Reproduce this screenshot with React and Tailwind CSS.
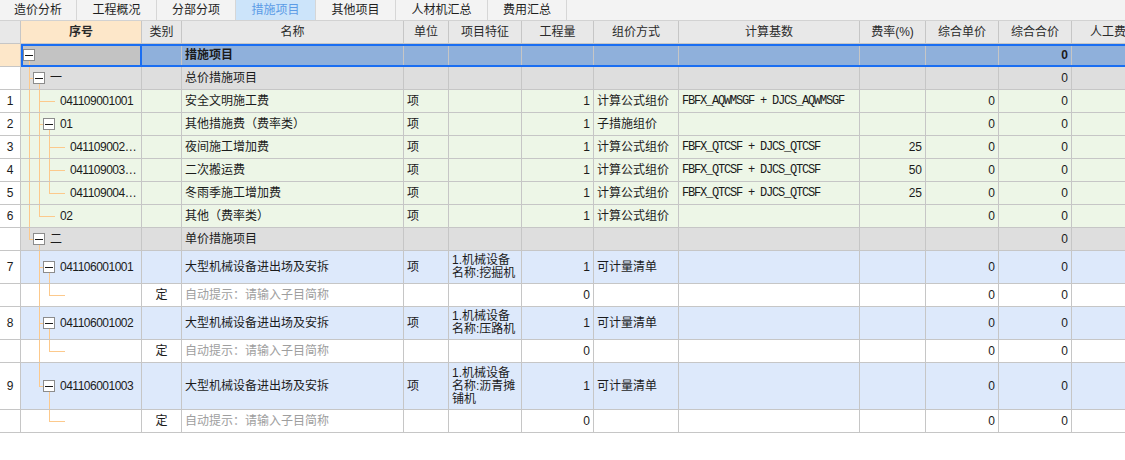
const COLS =
  "grid grid-cols-[21px_121px_40px_222px_45px_73px_72px_85px_181px_66px_73px_73px_73px]";

const tabs = [
  { label: "造价分析", w: "w-[77px]" },
  { label: "工程概况", w: "w-[80px]" },
  { label: "分部分项", w: "w-[79px]" },
  { label: "措施项目", w: "w-[80px]", active: true },
  { label: "其他项目", w: "w-[80px]" },
  { label: "人材机汇总", w: "w-[92px]" },
  { label: "费用汇总", w: "w-[79px]" },
];

const heads = [
  "", "序号", "类别", "名称", "单位", "项目特征", "工程量", "组价方式",
  "计算基数", "费率(%)", "综合单价", "综合合价", "人工费",
];

const CALC = "计算公式组价";
const QT = "FBFX_QTCSF + DJCS_QTCSF";
const HINT = "自动提示：请输入子目简称";

const rows = [
  {
    h: "h-[23px]", bg: "bg-[#dedede]", pad: "pl-[29px]", code: "一", name: "总价措施项目", total: "0",
    t: { full: ["left-[8px]"], hl: "left-[8px] w-[4px]", box: "left-[12px]", down: "left-[18px]" },
  },
  {
    h: "h-[23px]", bg: "bg-[#edf6e7]", num: "1", pad: "pl-[39px]", code: "041109001001", name: "安全文明施工费",
    unit: "项", qty: "1", method: CALC, base: "FBFX_AQWMSGF + DJCS_AQWMSGF", up: "0", total: "0",
    t: { full: ["left-[8px]", "left-[18px]"], hl: "left-[18px] w-[16px]" },
  },
  {
    h: "h-[23px]", bg: "bg-[#edf6e7]", num: "2", pad: "pl-[39px]", code: "01", name: "其他措施费（费率类）",
    unit: "项", qty: "1", method: "子措施组价", up: "0", total: "0",
    t: { full: ["left-[8px]", "left-[18px]"], hl: "left-[18px] w-[4px]", box: "left-[22px]", down: "left-[28px]" },
  },
  {
    h: "h-[23px]", bg: "bg-[#edf6e7]", num: "3", pad: "pl-[49px]", code: "041109002…", name: "夜间施工增加费",
    unit: "项", qty: "1", method: CALC, base: QT, rate: "25", up: "0", total: "0",
    t: { full: ["left-[8px]", "left-[18px]", "left-[28px]"], hl: "left-[28px] w-[16px]" },
  },
  {
    h: "h-[23px]", bg: "bg-[#edf6e7]", num: "4", pad: "pl-[49px]", code: "041109003…", name: "二次搬运费",
    unit: "项", qty: "1", method: CALC, base: QT, rate: "50", up: "0", total: "0",
    t: { full: ["left-[8px]", "left-[18px]", "left-[28px]"], hl: "left-[28px] w-[16px]" },
  },
  {
    h: "h-[23px]", bg: "bg-[#edf6e7]", num: "5", pad: "pl-[49px]", code: "041109004…", name: "冬雨季施工增加费",
    unit: "项", qty: "1", method: CALC, base: QT, rate: "25", up: "0", total: "0",
    t: { full: ["left-[8px]", "left-[18px]"], half: ["left-[28px]"], hl: "left-[28px] w-[16px]" },
  },
  {
    h: "h-[23px]", bg: "bg-[#edf6e7]", num: "6", pad: "pl-[39px]", code: "02", name: "其他（费率类）",
    unit: "项", qty: "1", method: CALC, up: "0", total: "0",
    t: { full: ["left-[8px]"], half: ["left-[18px]"], hl: "left-[18px] w-[16px]" },
  },
  {
    h: "h-[23px]", bg: "bg-[#dedede]", pad: "pl-[29px]", code: "二", name: "单价措施项目", total: "0",
    t: { half: ["left-[8px]"], hl: "left-[8px] w-[4px]", box: "left-[12px]", down: "left-[18px]" },
  },
  {
    h: "h-[33px]", bg: "bg-[#dde9fb]", num: "7", pad: "pl-[39px]", code: "041106001001", name: "大型机械设备进出场及安拆",
    unit: "项", feat: ["1.机械设备", "名称:挖掘机"], qty: "1", method: "可计量清单", up: "0", total: "0",
    t: { full: ["left-[18px]"], hl: "left-[18px] w-[4px]", box: "left-[22px]", down: "left-[28px]" },
  },
  {
    h: "h-[23px]", bg: "bg-white", type: "定", hint: true, qty: "0", up: "0", total: "0",
    t: { full: ["left-[18px]"], half: ["left-[28px]"], hl: "left-[28px] w-[16px]" },
  },
  {
    h: "h-[33px]", bg: "bg-[#dde9fb]", num: "8", pad: "pl-[39px]", code: "041106001002", name: "大型机械设备进出场及安拆",
    unit: "项", feat: ["1.机械设备", "名称:压路机"], qty: "1", method: "可计量清单", up: "0", total: "0",
    t: { full: ["left-[18px]"], hl: "left-[18px] w-[4px]", box: "left-[22px]", down: "left-[28px]" },
  },
  {
    h: "h-[23px]", bg: "bg-white", type: "定", hint: true, qty: "0", up: "0", total: "0",
    t: { full: ["left-[18px]"], half: ["left-[28px]"], hl: "left-[28px] w-[16px]" },
  },
  {
    h: "h-[47px]", bg: "bg-[#dde9fb]", num: "9", pad: "pl-[39px]", code: "041106001003", name: "大型机械设备进出场及安拆",
    unit: "项", feat: ["1.机械设备", "名称:沥青摊", "铺机"], qty: "1", method: "可计量清单", up: "0", total: "0",
    t: { half: ["left-[18px]"], hl: "left-[18px] w-[4px]", box: "left-[22px]", down: "left-[28px]" },
  },
  {
    h: "h-[23px]", bg: "bg-white", type: "定", hint: true, qty: "0", up: "0", total: "0",
    t: { half: ["left-[28px]"], hl: "left-[28px] w-[16px]" },
  },
];

const cell =
  "flex items-center overflow-hidden whitespace-nowrap border-r border-b border-[#c6c6c6] px-[3px]";
const LINE = "bg-[#fcc98c]";

function Tree({ t }) {
  return (
    <>
      {(t.full || []).map((c) => (
        <span key={"f" + c} className={`absolute top-0 -bottom-px w-px ${LINE} ${c}`} />
      ))}
      {(t.half || []).map((c) => (
        <span key={"h" + c} className={`absolute top-0 h-1/2 w-px ${LINE} ${c}`} />
      ))}
      {t.hl && <span className={`absolute top-1/2 h-px ${LINE} ${t.hl}`} />}
      {t.down && (
        <span className={`absolute top-[calc(50%+6px)] -bottom-px w-px ${LINE} ${t.down}`} />
      )}
      {t.box && (
        <span
          className={`absolute top-1/2 -translate-y-1/2 w-[12px] h-[12px] border border-[#8c8c8c] bg-white flex items-center justify-center ${t.box}`}
        >
          <span className="w-[8px] h-px bg-[#1a1a1a]" />
        </span>
      )}
    </>
  );
}

function Row({ r }) {
  const c = `${cell} ${r.bg}`;
  return (
    <div className={`${COLS} ${r.h}`}>
      <div className={`${cell} bg-white justify-center`}>{r.num}</div>
      <div className={`${c} relative ${r.pad || ""}`}>
        <Tree t={r.t} />
        <span className="tracking-[-0.5px]">{r.code}</span>
      </div>
      <div className={`${c} justify-center`}>{r.type}</div>
      <div className={c}>
        {r.hint ? <span className="text-[#9e9e9e]">{HINT}</span> : r.name}
      </div>
      <div className={c}>{r.unit}</div>
      <div className={`${c} whitespace-normal leading-[13px]`}>
        {r.feat && (
          <div className="flex flex-col">
            {r.feat.map((l) => (
              <span key={l}>{l}</span>
            ))}
          </div>
        )}
      </div>
      <div className={`${c} justify-end`}>{r.qty}</div>
      <div className={`${c} px-[2px]`}>{r.method}</div>
      <div className={`${c} font-['Liberation_Mono',monospace] tracking-[-1.2px]`}>{r.base}</div>
      <div className={`${c} justify-end`}>{r.rate}</div>
      <div className={`${c} justify-end`}>{r.up}</div>
      <div className={`${c} justify-end`}>{r.total}</div>
      <div className={c}></div>
    </div>
  );
}

export default function App() {
  return (
    <div className="w-[1125px] h-[460px] overflow-hidden bg-white font-['Liberation_Sans','Noto_Sans_CJK_SC',sans-serif] text-[12px] text-[#1b1b1b]">
      {/* tabs */}
      <div className="flex h-[21px] bg-[#f3f3f3] border-b border-[#d2d2d2]">
        {tabs.map((t) => (
          <div
            key={t.label}
            className={`${t.w} flex items-center justify-center border-r border-[#d6d6d6] ${
              t.active ? "bg-[#cce4fa] text-[#5b9be6]" : "text-[#1e1e1e]"
            }`}
          >
            {t.label}
          </div>
        ))}
      </div>

      <div className="w-[1145px]">
        {/* header */}
        <div className={`${COLS} h-[23px] bg-[#e8e8e8] text-[#2a2a2a]`}>
          {heads.map((h, i) => (
            <div
              key={i}
              className={`${cell} justify-center ${
                i === 1 ? "bg-[#fde7c9] font-bold" : ""
              }`}
            >
              {h}
            </div>
          ))}
        </div>

        {/* selected root row */}
        <div className={`${COLS} h-[23px] relative font-bold`}>
          <div className={`${cell} bg-[#fde7c9]`}></div>
          <div className={`${cell} bg-[#c3c3c3] relative`}>
            <Tree t={{ box: "left-[2px]", down: "left-[8px]" }} />
          </div>
          <div className={`${cell} bg-[#8fb0db]`}></div>
          <div className={`${cell} bg-[#8fb0db]`}>措施项目</div>
          <div className={`${cell} bg-[#8fb0db]`}></div>
          <div className={`${cell} bg-[#8fb0db]`}></div>
          <div className={`${cell} bg-[#8fb0db]`}></div>
          <div className={`${cell} bg-[#8fb0db]`}></div>
          <div className={`${cell} bg-[#8fb0db]`}></div>
          <div className={`${cell} bg-[#8fb0db]`}></div>
          <div className={`${cell} bg-[#8fb0db]`}></div>
          <div className={`${cell} bg-[#8fb0db] justify-end`}>0</div>
          <div className={`${cell} bg-[#8fb0db]`}></div>
          <div className="absolute left-[21px] right-0 top-0 bottom-0 border-y-2 border-l-2 border-[#1a6ef2] pointer-events-none" />
          <div className="absolute left-[21px] w-[121px] top-0 bottom-0 border-2 border-[#1a6ef2] pointer-events-none" />
        </div>

        {rows.map((r, i) => (
          <Row key={i} r={r} />
        ))}
      </div>
    </div>
  );
}
